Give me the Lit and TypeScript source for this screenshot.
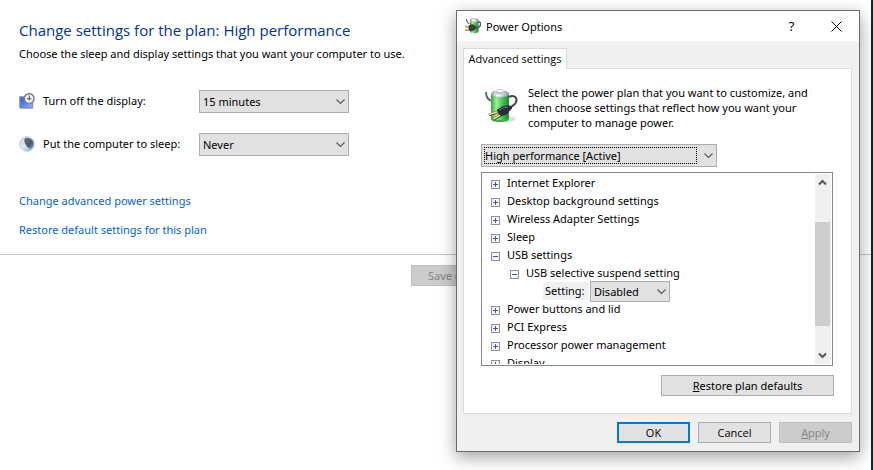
import { LitElement, html, css, svg, nothing } from "lit";
import { customElement, property } from "lit/decorators.js";

const fontStack = css`"Noto Sans", "Open Sans", sans-serif`;

@customElement("drop-down")
class DropDown extends LitElement {
  @property() label = "";
  @property() value = "";
  @property({ type: Boolean }) ring = false;
  @property({ type: Boolean, reflect: true }) compact = false;

  static styles = css`
    :host { display: block; height: 23px; font: 11px/15px ${fontStack}; }
    :host([compact]) { height: 21px; }
    .box { display: grid; height: 100%; grid-template-columns: 1fr 18px; align-items: center; }
    select {
      grid-area: 1 / 1 / 2 / 3; box-sizing: border-box; width: 100%; height: 100%;
      appearance: none; border: 1px solid #adadad; border-radius: 0; background: #e1e1e1;
      color: #000; font: inherit; padding: 0 18px 0 3px; margin: 0; outline: none;
    }
    .ring {
      grid-area: 1 / 1; align-self: stretch; margin: 3px 2px 3px 3px;
      border: 1px dotted #000; pointer-events: none;
    }
    .ringed { padding-left: 3px; }
    svg { grid-area: 1 / 2; width: 11px; height: 7px; pointer-events: none; justify-self: center; }
  `;

  render() {
    return html`<div class="box">
      <select class=${this.ring ? "ringed" : ""} aria-label=${this.label}>
        <option>${this.value}</option>
      </select>
      ${this.ring ? html`<span class="ring"></span>` : nothing}
      <svg viewBox="0 0 11 7"><path d="M1.500 1.500 5.500 5.500 9.500 1.500" fill="none" stroke="#555" stroke-width="1.100"/></svg>
    </div>`;
  }
}

const battery = svg`
  <defs>
    <linearGradient id="cell" x1="0" x2="1" y1="0" y2="0">
      <stop offset="0" stop-color="#2fa53e"/><stop offset=".3" stop-color="#9df293"/>
      <stop offset=".6" stop-color="#4acb57"/><stop offset="1" stop-color="#1b8a2c"/>
    </linearGradient>
    <linearGradient id="cap" x1="0" x2="1" y1="0" y2="0">
      <stop offset="0" stop-color="#9aa1a9"/><stop offset=".4" stop-color="#fff"/><stop offset="1" stop-color="#8f95a0"/>
    </linearGradient>
  </defs>`;

const largeBattery = html`<svg class="plan-icon" viewBox="0 0 34 36" aria-hidden="true">
  ${battery}
  <ellipse cx="23" cy="31" rx="9" ry="3" fill="#000" opacity=".12"/>
  <path d="M2 4c0 5 2 8 6 9" fill="none" stroke="#565b72" stroke-width="1.800"/>
  <path d="M7 6v25c0 4 18 4 18 0V6z" fill="url(#cell)"/>
  <path d="M7 29v2c0 4 18 4 18 0v-2c0 4-18 4-18 0z" fill="#39b449"/>
  <ellipse cx="16" cy="5.800" rx="9" ry="3.400" fill="url(#cap)" stroke="#949ca6" stroke-width=".5"/>
  <path d="M12 3v2c0 2 8 2 8 0V3z" fill="#c2c8d0"/>
  <ellipse cx="16" cy="3" rx="4" ry="1.700" fill="#f6f8fa" stroke="#9ba2af" stroke-width=".5"/>
  <path d="M25 9c4-2 7.500-.5 7.500 3 0 5-4 5-6.500 8" fill="none" stroke="#3f445b" stroke-width="2"/>
  <path d="m13 22 6-3.500 6-1 3 2.500-6 6.500-6 1.500z" fill="#2b2e3a" stroke="#151720" stroke-width=".6"/>
  <path d="m15 22 5-2.500 4-.5" fill="none" stroke="#777d90" stroke-width=".9"/>
  <path d="m13.500 24-8.500 3M16 27.500l-6.500 4" stroke="#64461b" stroke-width="2.800"/>
  <path d="m13.500 23.800-8.500 2.700M16 27.200 9.500 31" stroke="#f0d9a3" stroke-width="1.500"/>
</svg>`;

const smallBattery = html`<svg class="title-icon" viewBox="0 0 16 16" aria-hidden="true">
  ${battery}
  <path d="M1.500 1c0 3 1 4 3 5" fill="none" stroke="#626a72" stroke-width="1.200"/>
  <path d="M5 2.500v11c0 2.400 8.500 2.400 8.500 0v-11z" fill="url(#cell)"/>
  <ellipse cx="9.200" cy="2.400" rx="4.200" ry="2" fill="url(#cap)" stroke="#8b9398" stroke-width=".5"/>
  <path d="M13 4c3-.5 3 2.500 2 4s-2 2-4 2.500" fill="none" stroke="#525b55" stroke-width="1.400"/>
  <path d="M4 8c2-1.600 4-1.600 6 0l1 1.500-1 1.500c-1.500 1.800-4 2.400-6 1z" fill="#3b413f" stroke="#1a1f1b" stroke-width=".6"/>
  <path d="M0 8.600h4M0 12h4" stroke="#93752b" stroke-width="1.600"/>
  <path d="M0 8.300h3.500M0 11.700h3.500" stroke="#ecd07a" stroke-width=".8"/>
</svg>`;

const displayIcon = html`<svg class="row-icon" viewBox="0 0 16 16" aria-hidden="true">
  <defs><linearGradient id="scr" x1="0" x2="1" y1="0" y2="1">
    <stop offset="0" stop-color="#3355dc"/><stop offset=".55" stop-color="#5d80f5"/><stop offset="1" stop-color="#9fb6fb"/>
  </linearGradient></defs>
  <path d="M.8 3.800h12.800v10.600H.8z" fill="url(#scr)" stroke="#7e8fc0" stroke-width="1.200"/>
  <path d="M1 15.400h13" stroke="#9da1aa" stroke-width="1"/>
  <circle cx="10.200" cy="5.600" r="4.900" fill="#edf3f5" stroke="#7e8287" stroke-width="1.500"/>
  <path d="M10.300 2.500v5M8 5.800h4.500" fill="none" stroke="#4b6275" stroke-width="1.100"/>
</svg>`;

const sleepIcon = html`<svg class="row-icon" viewBox="0 0 16 16" aria-hidden="true">
  <defs>
    <linearGradient id="moon" x1="0" x2="1" y1="0" y2="1">
      <stop offset="0" stop-color="#cfd8e0"/><stop offset=".5" stop-color="#dbe6f3"/><stop offset="1" stop-color="#5f8fe8"/>
    </linearGradient>
    <linearGradient id="dark" x1="0" x2="1" y1="0" y2="1">
      <stop offset="0" stop-color="#6c7482"/><stop offset=".6" stop-color="#50555e"/><stop offset="1" stop-color="#7395dc"/>
    </linearGradient>
  </defs>
  <circle cx="8" cy="8" r="7.300" fill="url(#moon)" stroke="#c2cbd6" stroke-width="1"/>
  <path d="M5.500 2.400c4-1.400 8.500.6 9 4.600.2 2.600-.8 4.600-2.500 5.400C8 12 4.500 7 5.500 2.400z" fill="url(#dark)"/>
</svg>`;

type Node = { text: string; open?: boolean; children?: Node[]; setting?: string };

const tree: Node[] = [
  { text: "Internet Explorer" },
  { text: "Desktop background settings" },
  { text: "Wireless Adapter Settings" },
  { text: "Sleep" },
  { text: "USB settings", open: true, children: [{ text: "USB selective suspend setting", open: true, setting: "Disabled" }] },
  { text: "Power buttons and lid" },
  { text: "PCI Express" },
  { text: "Processor power management" },
  { text: "Display" },
];

@customElement("power-dialog")
class PowerDialog extends LitElement {
  static styles = css`
    :host {
      display: block; box-sizing: border-box; border: 1px solid #6b6b6b; background: #f0f0f0;
      box-shadow: 0 5px 16px rgba(0, 0, 0, .38); font: 11px/15px ${fontStack}; color: #000;
    }
    button { font: inherit; color: inherit; margin: 0; padding: 0; border-radius: 0; }
    .title { display: flex; align-items: center; height: 30px; background: #fff; padding-left: 8px; }
    .title-icon { width: 16px; height: 16px; margin-right: 5px; }
    .title h2 { flex: 1; margin: 0; font-size: 11px; font-weight: 400; }
    .title button { width: 45px; height: 30px; border: 0; background: none; display: grid; place-items: center; }
    .title .help { font-size: 13px; }
    .title button svg { width: 11px; height: 11px; }
    .body { padding: 7px 7px 8px 6px; }
    .tab {
      display: block; position: relative; width: 104px; height: 21px; margin-bottom: -1px; padding-bottom: 2px;
      border: 1px solid #d9d9d9; border-bottom: 0; background: #fff; font-family: "Open Sans", sans-serif;
    }
    .panel { border: 1px solid #dcdcdc; background: #fff; padding: 16px 18px 17px 17px; }
    .intro { display: flex; gap: 10px; padding-left: 3px; }
    .plan-icon { width: 34px; height: 36px; margin-top: 3px; flex: none; }
    .intro p { margin: 0; width: 300px; }
    .plan { width: 236px; margin: 14px 0 5px; }
    .tree { display: flex; border: 1px solid #828790; height: 194px; padding: 1px; box-sizing: border-box; }
    .nodes { flex: 1; overflow: hidden; }
    ul { list-style: none; margin: 0; padding: 0 0 0 19px; }
    .nodes > ul { padding-left: 8px; }
    .node { display: flex; align-items: flex-start; gap: 7px; height: 18px; line-height: 18px; }
    .toggle { width: 9px; height: 9px; display: block; border: 0; background: none; margin-top: 6px; }
    .toggle svg { display: block; width: 9px; height: 9px; }
    .setting { display: flex; height: 18px; padding-left: 33px; }
    .setting span { background: #f0f0f0; width: 44px; padding-left: 2px; line-height: 18px; margin-right: 1px; }
    .setting drop-down { width: 80px; margin-top: -1px; position: relative; }
    .bar { width: 16px; background: #f0f0f0; display: flex; flex-direction: column; }
    .bar button { height: 17px; width: 15px; border: 0; background: none; display: grid; place-items: center; }
    .bar svg { width: 9px; height: 7px; }
    .track { flex: 1; padding-top: 31px; }
    .thumb { width: 15px; height: 104px; background: #cdcdcd; }
    .actions { display: flex; justify-content: flex-end; gap: 8px; }
    .btn { width: 73px; height: 21px; border: 1px solid #adadad; background: #e1e1e1; }
    .btn.wide { width: 173px; }
    .btn.ok { border: 2px solid #0078d7; }
    .btn:disabled { background: #ccc; border-color: #bfbfbf; color: #838383; }
    .restore { margin: 9px -1px 0 0; }
    .footer { padding-top: 8px; }
    .footer .btn { font-family: "Open Sans", sans-serif; }
  `;

  private node(n: Node): unknown {
    return html`<li>
      <div class="node">
        <button class="toggle" aria-label=${(n.open ? "Collapse " : "Expand ") + n.text}>
          <svg viewBox="0 0 9 9">
            <rect x=".5" y=".5" width="8" height="8" fill="#f7f7f7" stroke="#919191"/>
            <path d=${n.open ? "M2 4.5h5" : "M2 4.5h5M4.5 2v5"} stroke="#3b57a5"/>
          </svg>
        </button><span>${n.text}</span>
      </div>
      ${n.children ? html`<ul>${n.children.map((c) => this.node(c))}</ul>` : nothing}
      ${n.setting
        ? html`<div class="setting"><span>Setting:</span><drop-down compact label="Setting" value=${n.setting}></drop-down></div>`
        : nothing}
    </li>`;
  }

  render() {
    return html`
      <div class="title">
        ${smallBattery}
        <h2>Power Options</h2>
        <button class="help" aria-label="Help">?</button>
        <button aria-label="Close"><svg viewBox="0 0 11 11"><path d="m.5.5 10 10M10.500.5l-10 10" stroke="#000" stroke-width="1"/></svg></button>
      </div>
      <div class="body">
        <button class="tab">Advanced settings</button>
        <div class="panel">
          <div class="intro">
            ${largeBattery}
            <p>Select the power plan that you want to customize, and then choose settings that reflect how you want your computer to manage power.</p>
          </div>
          <drop-down class="plan" ring label="Power plan" value="High performance [Active]"></drop-down>
          <div class="tree">
            <div class="nodes"><ul>${tree.map((n) => this.node(n))}</ul></div>
            <div class="bar">
              <button aria-label="Scroll up"><svg viewBox="0 0 9 7"><path d="m1 5.500 3.500-3.500L8 5.500" fill="none" stroke="#555" stroke-width="2"/></svg></button>
              <div class="track"><div class="thumb"></div></div>
              <button aria-label="Scroll down"><svg viewBox="0 0 9 7"><path d="m1 1.500 3.500 3.500L8 1.500" fill="none" stroke="#555" stroke-width="2"/></svg></button>
            </div>
          </div>
          <div class="actions restore"><button class="btn wide"><u>R</u>estore plan defaults</button></div>
        </div>
        <div class="actions footer">
          <button class="btn ok">OK</button>
          <button class="btn">Cancel</button>
          <button class="btn" disabled><u>A</u>pply</button>
        </div>
      </div>`;
  }
}

@customElement("app-root")
class AppRoot extends LitElement {
  static styles = css`
    :host {
      display: block; position: relative; box-sizing: border-box; min-height: 100vh; overflow: hidden;
      background: #fff; border-right: 2px solid #1c1f24; font: 11px/15px ${fontStack}; color: #000;
    }
    main { padding: 18px 19px 17px; }
    h1 { margin: 0; font: 400 15px/24px "Open Sans", sans-serif; color: #039; }
    .lead { margin: 4px 0 29px; }
    .row { display: grid; grid-template-columns: 16px 148px 150px; column-gap: 8px; align-items: center; margin-bottom: 20px; }
    .row > span { line-height: 17px; padding-bottom: 2px; }
    .row-icon { width: 16px; height: 16px; margin-bottom: 2px; }
    a { display: block; width: max-content; color: #0066cc; text-decoration: none; margin-top: 14px; }
    .links { padding-top: 3px; }
    footer { border-top: 1px solid #c5c5c5; padding: 10px 0 0 411px; }
    .save { width: 104px; height: 21px; border: 1px solid #bfbfbf; background: #ccc; color: #838383; font: inherit; padding: 0 0 0 16px; text-align: left; }
    power-dialog { position: absolute; left: 456px; top: 10px; width: 404px; }
  `;

  render() {
    return html`
      <main>
        <h1>Change settings for the plan: High performance</h1>
        <p class="lead">Choose the sleep and display settings that you want your computer to use.</p>
        <div class="row">${displayIcon}<span>Turn off the display:</span><drop-down label="Turn off the display" value="15 minutes"></drop-down></div>
        <div class="row">${sleepIcon}<span>Put the computer to sleep:</span><drop-down label="Put the computer to sleep" value="Never"></drop-down></div>
        <nav class="links">
          <a href="#advanced">Change advanced power settings</a>
          <a href="#defaults">Restore default settings for this plan</a>
        </nav>
      </main>
      <footer><button class="save" disabled>Save changes</button></footer>
      <power-dialog role="dialog" aria-label="Power Options"></power-dialog>`;
  }
}
